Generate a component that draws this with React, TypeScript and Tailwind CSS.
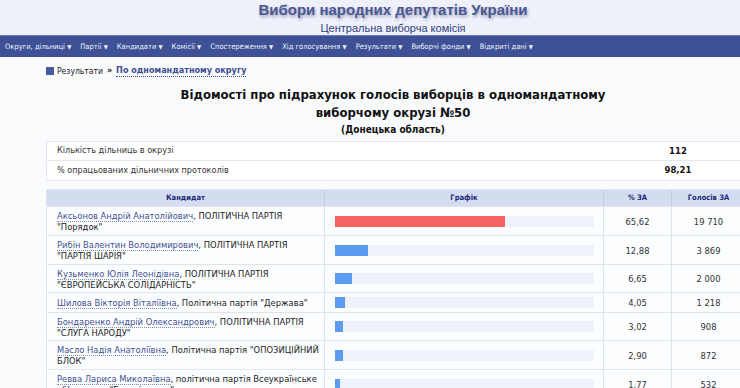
import React from "react";

const navItems = [
  "Округи, дільниці",
  "Партії",
  "Кандидати",
  "Комісії",
  "Спостереження",
  "Хід голосування",
  "Результати",
  "Виборчі фонди",
  "Відкриті дані",
];

interface Row {
  name: string;
  party: string;
  pct: number;
  pctText: string;
  votes: string;
  h: string;
}

const rows: Row[] = [
  { name: "Аксьонов Андрій Анатолійович", party: ', ПОЛІТИЧНА ПАРТІЯ "Порядок"', pct: 65.62, pctText: "65,62", votes: "19 710", h: "h-[29px]" },
  { name: "Рибін Валентин Володимирович", party: ', ПОЛІТИЧНА ПАРТІЯ "ПАРТІЯ ШАРІЯ"', pct: 12.88, pctText: "12,88", votes: "3 869", h: "h-[29px]" },
  { name: "Кузьменко Юлія Леонідівна", party: ', ПОЛІТИЧНА ПАРТІЯ "ЄВРОПЕЙСЬКА СОЛІДАРНІСТЬ"', pct: 6.65, pctText: "6,65", votes: "2 000", h: "h-[28px]" },
  { name: "Шилова Вікторія Віталіївна", party: ', Політична партія "Держава"', pct: 4.05, pctText: "4,05", votes: "1 218", h: "h-[20px]" },
  { name: "Бондаренко Андрій Олександрович", party: ', ПОЛІТИЧНА ПАРТІЯ "СЛУГА НАРОДУ"', pct: 3.02, pctText: "3,02", votes: "908", h: "h-[28px]" },
  { name: "Масло Надія Анатоліївна", party: ', Політична партія "ОПОЗИЦІЙНИЙ БЛОК"', pct: 2.9, pctText: "2,90", votes: "872", h: "h-[29px]" },
  { name: "Ревва Лариса Миколаївна", party: ', політична партія Всеукраїнське об’єднання "Батьківщина"', pct: 1.77, pctText: "1,77", votes: "532", h: "h-[29px]" },
];

const tahoma = "font-['DejaVu_Sans_Condensed','DejaVu_Sans',Tahoma,sans-serif] font-stretch-condensed";

export default function App() {
  return (
    <div className="w-[740px] h-[388px] overflow-hidden bg-[#fafbfd]">
      <div className="w-[786px]">
        {/* header */}
        <div className="bg-[#eef0fa] h-[35px] text-center font-['Liberation_Sans',Arial,sans-serif]">
          <div className="pt-[1px] text-[15px] leading-[18px] font-bold text-[#4a5790] [text-shadow:1px_2px_3px_rgba(60,70,110,0.45)]">
            Вибори народних депутатів України
          </div>
          <div className="text-[11px] leading-[14px] text-[#2f3e82] mt-[2px]">
            Центральна виборча комісія
          </div>
        </div>

        {/* nav */}
        <div className={`h-[22px] bg-[#3e5196] border-t border-[#6b7cc0] flex items-center pl-[5px] gap-[9px] ${tahoma} text-[7.5px] text-[#eef1fb]`}>
          {navItems.map((n) => (
            <span key={n} className="whitespace-nowrap">
              {n} <span className="text-[6px]">▼</span>
            </span>
          ))}
        </div>

        <div className={`pl-[46px] ${tahoma}`}>
          {/* breadcrumb */}
          <div className="flex items-center h-[14px] mt-[7px] text-[#222]">
            <span className="w-[8px] h-[8px] bg-[#4859a0] mr-[3px]" />
            <span className="text-[8.5px]">Результати</span>
            <span className="font-bold mx-[4px] text-[9px]">»</span>
            <span className="text-[9px] font-bold text-[#3c4c8e] border-b border-dotted border-[#3c4c8e] leading-[11px]">
              По одномандатному округу
            </span>
          </div>

          {/* title */}
          <div className="w-[694px] text-center text-[#111] font-bold mt-[8px]">
            <div className="text-[13px] leading-[18px]">
              Відомості про підрахунок голосів виборців в одномандатному
              <br />
              виборчому окрузі №50
            </div>
            <div className="text-[10px] leading-[13px] mt-[1px]">(Донецька область)</div>
          </div>

          {/* info table */}
          <div className="w-[700px] mt-[5px] border border-[#e4e8ee] bg-white text-[9px] text-[#333]">
            <div className="flex h-[19px] items-center border-b border-[#e4e8ee]">
              <div className="w-[574px] pl-[10px]">Кількість дільниць в окрузі</div>
              <div className="flex-1 text-center font-bold text-[#111] text-[9.5px] pr-[10px]">112</div>
            </div>
            <div className="flex h-[19px] items-center">
              <div className="w-[574px] pl-[10px]">% опрацьованих дільничних протоколів</div>
              <div className="flex-1 text-center font-bold text-[#111] text-[9.5px] pr-[10px]">98,21</div>
            </div>
          </div>

          {/* results table */}
          <div className="w-[700px] mt-[8px] border border-[#e1e6ee] bg-[#fcfdff]">
            <div className="flex h-[16px] bg-[#d4dcf2] text-[7.5px] font-bold text-[#1c2a78] items-center">
              <div className="w-[277px] text-center">Кандидат</div>
              <div className="w-[279px] h-full flex items-center justify-center border-l border-[#c4cde6]">Графік</div>
              <div className="w-[68px] h-full flex items-center justify-center border-l border-[#c4cde6]">% ЗА</div>
              <div className="flex-1 h-full flex items-center justify-center border-l border-[#c4cde6]">Голосів ЗА</div>
            </div>
            {rows.map((r, i) => (
              <div key={i} className={`flex ${r.h} border-t border-[#dfe4ec] text-[9.3px] leading-[11px]`}>
                <div className="w-[277px] pl-[10px] pr-[1px] flex items-center text-[#222]">
                  <span>
                    <span className="text-[#3e5190] border-b border-dotted border-[#7d8bbd]">{r.name}</span>
                    {r.party}
                  </span>
                </div>
                <div className="w-[279px] border-l border-[#dfe4ec] flex items-center pl-[10px] pr-[9px]">
                  <div className="w-full h-[11px] bg-[#eef2fb]">
                    <div
                      className={`h-full ${i === 0 ? "bg-[#f86262]" : "bg-[#5b9cf0]"}`}
                      style={{ width: `${Math.max(r.pct, 1.5)}%` }}
                    />
                  </div>
                </div>
                <div className="w-[68px] border-l border-[#dfe4ec] flex items-center justify-center text-[#333]">
                  {r.pctText}
                </div>
                <div className="flex-1 border-l border-[#dfe4ec] flex items-center justify-center text-[#333]">
                  {r.votes}
                </div>
              </div>
            ))}
          </div>
        </div>
      </div>
    </div>
  );
}
